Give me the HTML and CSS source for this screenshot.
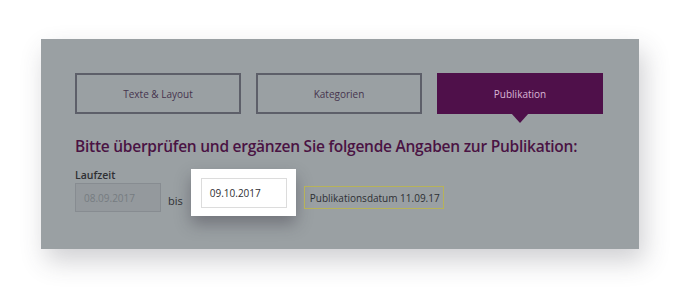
FILE: index.html
```html
<!DOCTYPE html>
<html lang="de">
<head>
<meta charset="utf-8">
<link rel="stylesheet" href="styles.css">
</head>
<body>
<div class="stage">
  <section class="panel">
    <nav class="tabs">
      <div class="tab">Texte &amp; Layout</div>
      <div class="tab">Kategorien</div>
      <div class="tab tab-active">Publikation</div>
    </nav>
    <h1 class="title">Bitte überprüfen und ergänzen Sie folgende Angaben zur Publikation:</h1>
    <div class="label">Laufzeit</div>
    <div class="row">
      <div class="field field-disabled">08.09.2017</div>
      <span class="bis">bis</span>
      <div class="spotlight">
        <div class="field field-active">09.10.2017</div>
      </div>
      <div class="badge">Publikationsdatum 11.09.17</div>
    </div>
  </section>
</div>
</body>
</html>
```

FILE: styles.css
```css
* { box-sizing: border-box; }
html, body { margin: 0; padding: 0; background: #ffffff; }
body { font-family: "Open Sans", "Noto Sans", sans-serif; width: 680px; height: 294px; overflow: hidden; }

.stage { padding: 39px 41px 0 41px; }

.panel {
  width: 598px;
  height: 210px;
  background: #9aa0a3;
  padding: 34px 36px 0 34px;
  box-shadow: 5px 12px 24px rgba(60, 60, 70, 0.24);
}

.tabs { display: flex; gap: 15px; }
.tab {
  width: 166px;
  height: 41px;
  border: 2px solid #5d5f69;
  display: flex;
  align-items: center;
  justify-content: center;
  font-size: 10px;
  color: #46344e;
  position: relative;
}
.tab-active {
  background: #4f104a;
  border-color: #4f104a;
  color: #d9b6d6;
}
.tab-active::after {
  content: "";
  position: absolute;
  left: 50%;
  bottom: -11px;
  margin-left: -9px;
  border-left: 9px solid transparent;
  border-right: 9px solid transparent;
  border-top: 10px solid #4f104a;
}

.title {
  margin: 22px 0 0 0;
  font-size: 15.5px;
  line-height: 20px;
  letter-spacing: -0.25px;
  font-weight: 600;
  color: #4a1343;
  white-space: nowrap;
}

.label {
  margin-top: 12px;
  font-size: 10.5px;
  line-height: 14px;
  font-weight: 600;
  color: #2f3034;
}

.row {
  display: flex;
  align-items: flex-start;
  margin-top: 1px;
}

.field {
  width: 86px;
  height: 29px;
  display: flex;
  align-items: center;
  padding-left: 8px;
  font-size: 10px;
}
.field-disabled {
  background: #94999d;
  border: 1px solid #878c91;
  color: #767c81;
}
.bis {
  margin: 11px 0 0 7px;
  font-size: 11px;
  line-height: 14px;
  color: #2f3034;
}
.spotlight {
  margin: -14px 0 0 8px;
  background: #ffffff;
  padding: 9px 9px 8px 10px;
  box-shadow: 0 8px 16px rgba(40, 35, 50, 0.35);
}
.field-active {
  height: 30px;
  background: #ffffff;
  border: 1px solid #dcdcdc;
  color: #2e2e32;
}
.badge {
  margin: 3px 0 0 8px;
  width: 140px;
  height: 23px;
  border: 1px solid #b7b25a;
  display: flex;
  align-items: center;
  padding-left: 5px;
  font-size: 10px;
  color: #2d2f33;
  white-space: nowrap;
}
```
